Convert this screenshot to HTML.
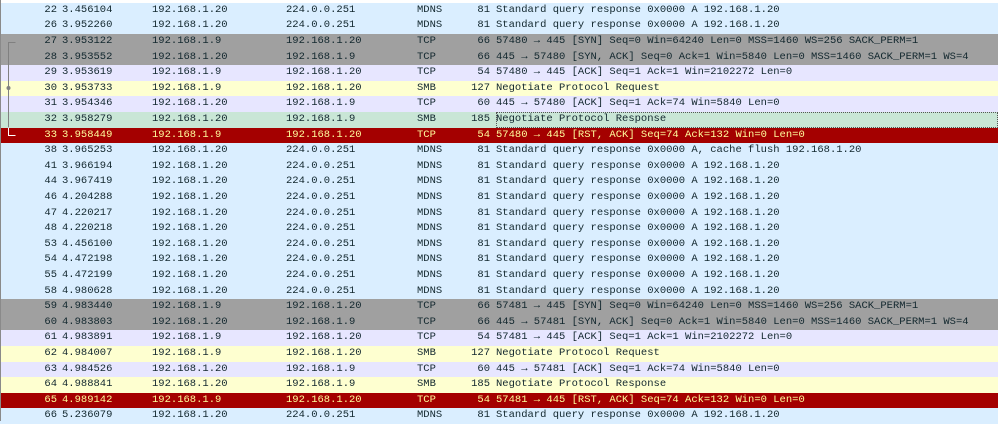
<!DOCTYPE html>
<html><head><meta charset="utf-8"><style>
body{margin:0;width:998px;height:421px;overflow:hidden;background:#fff;font-family:"Liberation Mono",monospace;font-size:10.5px;}
.r{position:absolute;left:0;width:998px;height:15.6px;line-height:15.6px;color:#12272e;white-space:pre;}
.r span{position:absolute;top:0}
.n{right:941px;text-align:right}
.t{left:62px}.s{left:152px}.d{left:286px}.p{left:417px}
.l{right:508px;text-align:right}.i{left:496px}
.m{background:#daeeff}.g{background:#a0a0a0}.v{background:#e7e6ff}.y{background:#feffd0}.gr{background:#c9e6d6}
.red{background:#a40000;color:#fffc9c}
#edge{position:absolute;left:0;top:0;width:1px;height:421px;background:#8a8a8a;z-index:5}
</style></head><body>
<div id="edge"></div>
<div id="rows"></div>
<svg style="position:absolute;left:0;top:0;z-index:4" width="20" height="421">
<path d="M15.5 42.5H8.5V135.5H15.5" fill="none" stroke="#808080" stroke-width="1"/>
<path d="M8.5 127.5V135.5H15.5" fill="none" stroke="#ffffff" stroke-width="1"/>
<circle cx="8.5" cy="88" r="2" fill="#808080"/>
</svg>
<script>
const R=[
["m","22","3.456104","192.168.1.20","224.0.0.251","MDNS","81","Standard query response 0x0000 A 192.168.1.20"],
["m","26","3.952260","192.168.1.20","224.0.0.251","MDNS","81","Standard query response 0x0000 A 192.168.1.20"],
["g","27","3.953122","192.168.1.9","192.168.1.20","TCP","66","57480 → 445 [SYN] Seq=0 Win=64240 Len=0 MSS=1460 WS=256 SACK_PERM=1"],
["g","28","3.953552","192.168.1.20","192.168.1.9","TCP","66","445 → 57480 [SYN, ACK] Seq=0 Ack=1 Win=5840 Len=0 MSS=1460 SACK_PERM=1 WS=4"],
["v","29","3.953619","192.168.1.9","192.168.1.20","TCP","54","57480 → 445 [ACK] Seq=1 Ack=1 Win=2102272 Len=0"],
["y","30","3.953733","192.168.1.9","192.168.1.20","SMB","127","Negotiate Protocol Request"],
["v","31","3.954346","192.168.1.20","192.168.1.9","TCP","60","445 → 57480 [ACK] Seq=1 Ack=74 Win=5840 Len=0"],
["gr","32","3.958279","192.168.1.20","192.168.1.9","SMB","185","Negotiate Protocol Response"],
["red","33","3.958449","192.168.1.9","192.168.1.20","TCP","54","57480 → 445 [RST, ACK] Seq=74 Ack=132 Win=0 Len=0"],
["m","38","3.965253","192.168.1.20","224.0.0.251","MDNS","81","Standard query response 0x0000 A, cache flush 192.168.1.20"],
["m","41","3.966194","192.168.1.20","224.0.0.251","MDNS","81","Standard query response 0x0000 A 192.168.1.20"],
["m","44","3.967419","192.168.1.20","224.0.0.251","MDNS","81","Standard query response 0x0000 A 192.168.1.20"],
["m","46","4.204288","192.168.1.20","224.0.0.251","MDNS","81","Standard query response 0x0000 A 192.168.1.20"],
["m","47","4.220217","192.168.1.20","224.0.0.251","MDNS","81","Standard query response 0x0000 A 192.168.1.20"],
["m","48","4.220218","192.168.1.20","224.0.0.251","MDNS","81","Standard query response 0x0000 A 192.168.1.20"],
["m","53","4.456100","192.168.1.20","224.0.0.251","MDNS","81","Standard query response 0x0000 A 192.168.1.20"],
["m","54","4.472198","192.168.1.20","224.0.0.251","MDNS","81","Standard query response 0x0000 A 192.168.1.20"],
["m","55","4.472199","192.168.1.20","224.0.0.251","MDNS","81","Standard query response 0x0000 A 192.168.1.20"],
["m","58","4.980628","192.168.1.20","224.0.0.251","MDNS","81","Standard query response 0x0000 A 192.168.1.20"],
["g","59","4.983440","192.168.1.9","192.168.1.20","TCP","66","57481 → 445 [SYN] Seq=0 Win=64240 Len=0 MSS=1460 WS=256 SACK_PERM=1"],
["g","60","4.983803","192.168.1.20","192.168.1.9","TCP","66","445 → 57481 [SYN, ACK] Seq=0 Ack=1 Win=5840 Len=0 MSS=1460 SACK_PERM=1 WS=4"],
["v","61","4.983891","192.168.1.9","192.168.1.20","TCP","54","57481 → 445 [ACK] Seq=1 Ack=1 Win=2102272 Len=0"],
["y","62","4.984007","192.168.1.9","192.168.1.20","SMB","127","Negotiate Protocol Request"],
["v","63","4.984526","192.168.1.20","192.168.1.9","TCP","60","445 → 57481 [ACK] Seq=1 Ack=74 Win=5840 Len=0"],
["y","64","4.988841","192.168.1.20","192.168.1.9","SMB","185","Negotiate Protocol Response"],
["red","65","4.989142","192.168.1.9","192.168.1.20","TCP","54","57481 → 445 [RST, ACK] Seq=74 Ack=132 Win=0 Len=0"],
["m","66","5.236079","192.168.1.20","224.0.0.251","MDNS","81","Standard query response 0x0000 A 192.168.1.20"]];
let h="";R.forEach((r,k)=>{const top=(2.8+k*15.6).toFixed(2);
h+=`<div class="r ${r[0]}" style="top:${top}px"><span class="n">${r[1]}</span><span class="t">${r[2]}</span><span class="s">${r[3]}</span><span class="d">${r[4]}</span><span class="p">${r[5]}</span><span class="l">${r[6]}</span><span class="i"${r[1]=="32"?' style="outline:1px dotted #555;outline-offset:-1px;width:502px"':''}>${r[7]}</span></div>`;});
document.getElementById("rows").innerHTML=h;
</script>
</body></html>
